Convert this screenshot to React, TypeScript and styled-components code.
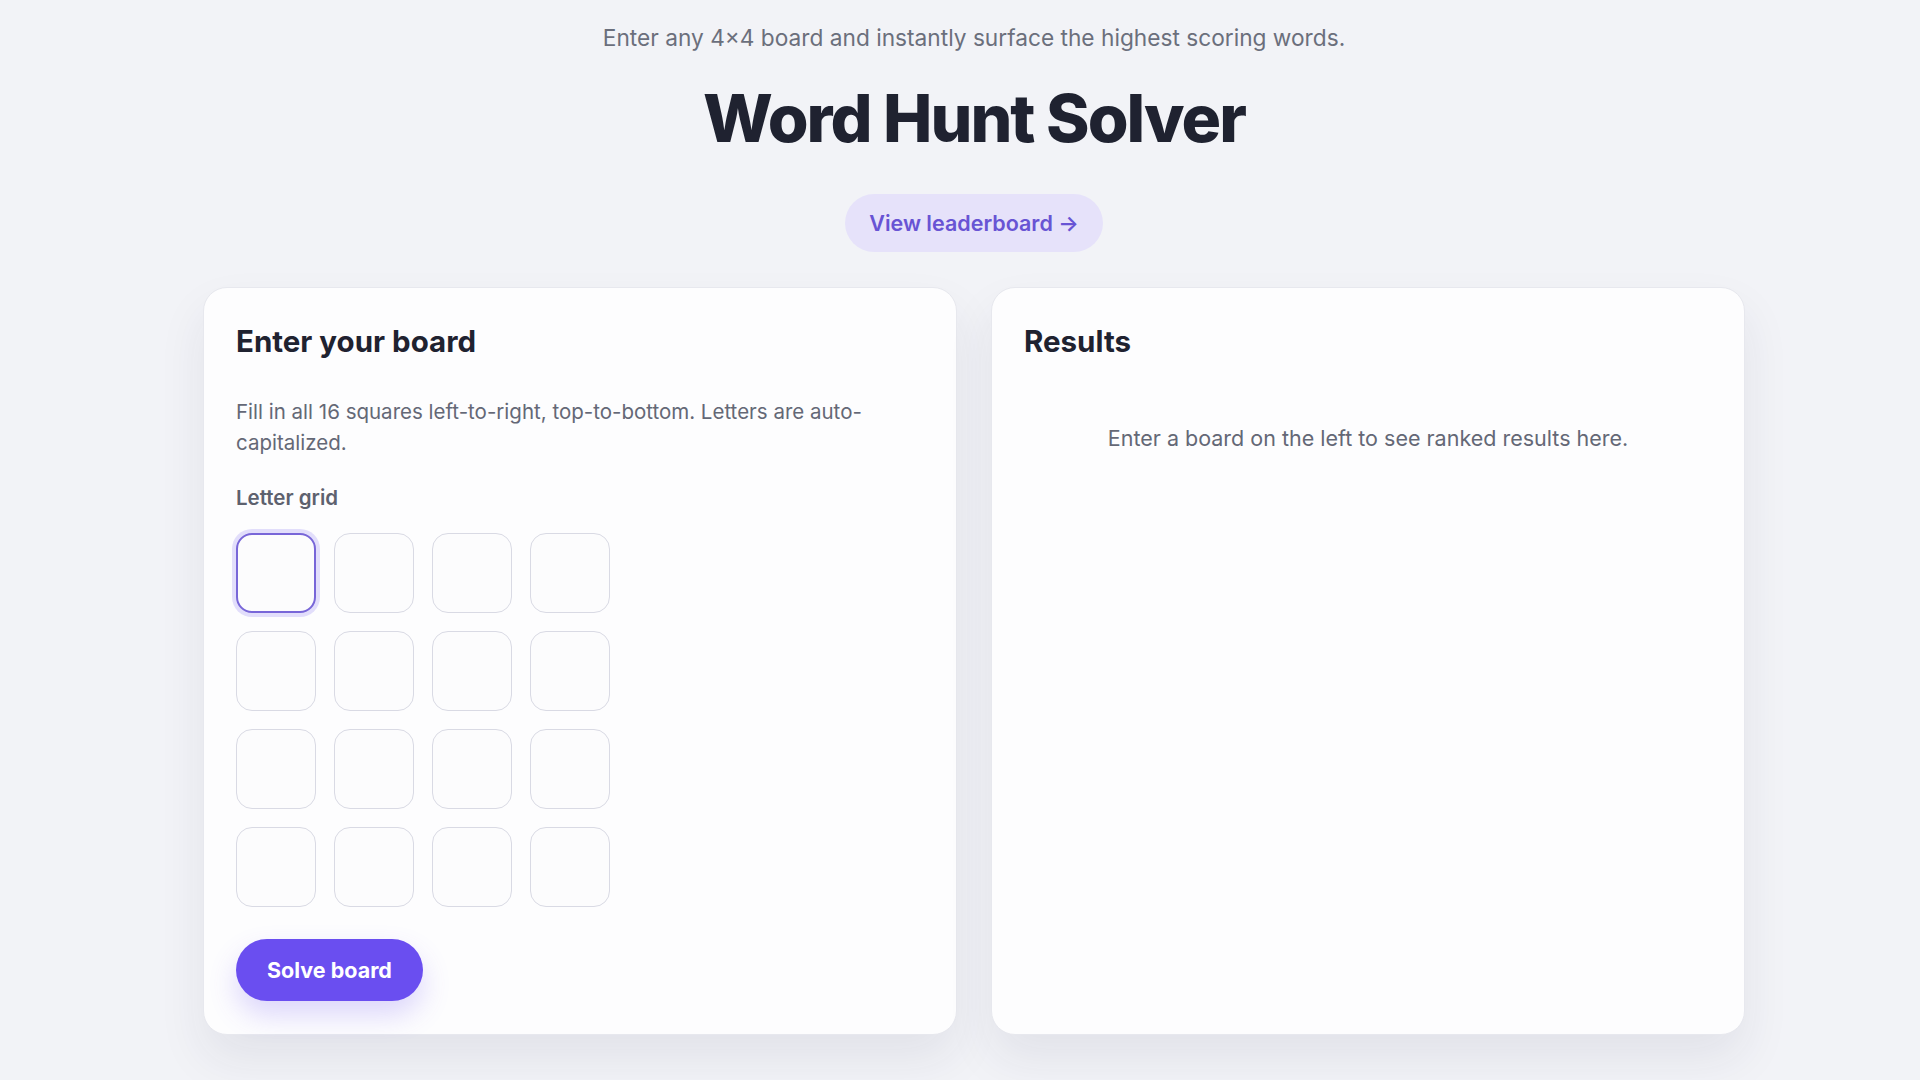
import styled, { createGlobalStyle } from "styled-components";

const GlobalStyle = createGlobalStyle`
  * {
    box-sizing: border-box;
  }

  body {
    margin: 0;
    background: #f2f3f7;
    font-family: Inter, "Noto Sans", "Liberation Sans", sans-serif;
    color: #1f2230;
  }
`;

const Page = styled.div`
  min-height: 100vh;
  padding: 22px 0 40px 28px;
`;

const Hero = styled.header`
  display: flex;
  flex-direction: column;
  align-items: center;
  text-align: center;
`;

const Tagline = styled.p`
  margin: 0;
  font-size: 22.7px;
  line-height: 32px;
  color: #6b6f7c;
`;

const Title = styled.h1`
  margin: 24px 0 0;
  font-size: 66px;
  line-height: 80px;
  font-weight: 800;
  letter-spacing: -0.03em;
  color: #1f2230;
`;

const PillLink = styled.a`
  margin-top: 36px;
  display: inline-flex;
  align-items: center;
  gap: 8px;
  height: 58px;
  padding: 0 24px;
  border-radius: 999px;
  background: #e6e2fa;
  color: #6854d4;
  font-size: 21.5px;
  font-weight: 600;
  text-decoration: none;
  cursor: pointer;
`;

const Columns = styled.main`
  max-width: 1542px;
  margin: 35px auto 0;
  display: grid;
  grid-template-columns: 1fr 1fr;
  gap: 34px;
`;

const Card = styled.section`
  min-height: 748px;
  padding: 32px 32px 31px;
  background: #fdfdfe;
  border: 1px solid #e7e8ee;
  border-radius: 24px;
  box-shadow: 0 24px 48px rgba(40, 40, 80, 0.08);
  display: flex;
  flex-direction: column;
`;

const CardTitle = styled.h2`
  margin: 0;
  font-size: 29.5px;
  line-height: 42px;
  font-weight: 700;
  color: #1f2230;
`;

const Hint = styled.p`
  margin: 34px 0 0;
  font-size: 20.5px;
  line-height: 31px;
  color: #646876;
`;

const FieldLabel = styled.div`
  margin-top: 26px;
  font-size: 20.5px;
  line-height: 28px;
  font-weight: 600;
  color: #5d616e;
`;

const Board = styled.div`
  margin-top: 21px;
  display: grid;
  grid-template-columns: repeat(4, 80px);
  grid-auto-rows: 80px;
  gap: 18px;
`;

const Cell = styled.input<{ $active?: boolean }>`
  width: 80px;
  height: 80px;
  border-radius: 16px;
  border: ${(p) => (p.$active ? "2px solid #7866d8" : "1.5px solid #d9dae4")};
  box-shadow: ${(p) =>
    p.$active ? "0 0 0 4px rgba(133, 112, 240, 0.22)" : "none"};
  background: #fcfcfd;
  text-align: center;
  font-family: inherit;
  font-size: 34px;
  font-weight: 700;
  text-transform: uppercase;
  color: #1f2230;
  outline: none;
`;

const SolveButton = styled.button`
  margin-top: 32px;
  align-self: flex-start;
  height: 62px;
  padding: 0 31px;
  border: none;
  border-radius: 999px;
  background: #6a4ef0;
  color: #ffffff;
  font-family: inherit;
  font-size: 21.5px;
  font-weight: 700;
  box-shadow: 0 14px 28px rgba(106, 78, 240, 0.22);
  cursor: pointer;
`;

const EmptyState = styled.p`
  margin: 61px 0 0;
  text-align: center;
  font-size: 21.5px;
  line-height: 30px;
  color: #646876;
`;

export default function App() {
  const cells = Array.from({ length: 16 }, (_, i) => i);

  return (
    <>
      <GlobalStyle />
      <Page>
        <Hero>
          <Tagline>
            Enter any 4×4 board and instantly surface the highest scoring words.
          </Tagline>
          <Title>Word Hunt Solver</Title>
          <PillLink href="#leaderboard">View leaderboard →</PillLink>
        </Hero>

        <Columns>
          <Card>
            <CardTitle>Enter your board</CardTitle>
            <Hint>
              Fill in all 16 squares left-to-right, top-to-bottom. Letters are
              auto-capitalized.
            </Hint>
            <FieldLabel>Letter grid</FieldLabel>
            <Board>
              {cells.map((i) => (
                <Cell
                  key={i}
                  maxLength={1}
                  aria-label={`Letter ${i + 1}`}
                  $active={i === 0}
                />
              ))}
            </Board>
            <SolveButton>Solve board</SolveButton>
          </Card>

          <Card>
            <CardTitle>Results</CardTitle>
            <EmptyState>
              Enter a board on the left to see ranked results here.
            </EmptyState>
          </Card>
        </Columns>
      </Page>
    </>
  );
}
